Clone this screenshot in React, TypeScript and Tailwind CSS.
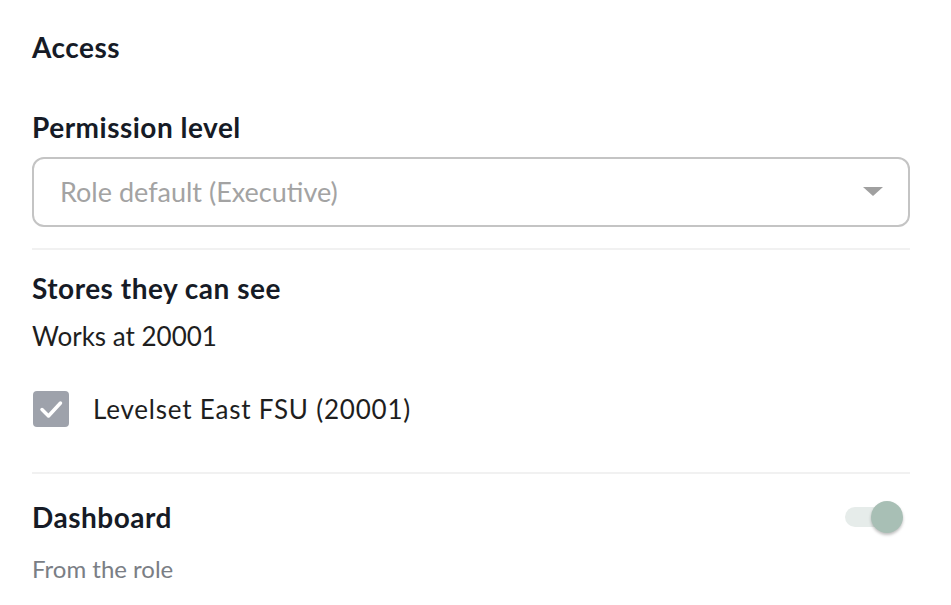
import React from 'react';

// Access settings panel
function Divider() {
  return <div className="h-[2px] w-full bg-[#f1f1f1]" />;
}

export default function App() {
  return (
    <div className="w-[951px] h-[605px] overflow-hidden bg-white font-['Lato',sans-serif] text-[#161b26]">
      <div className="w-[878px] ml-8 pt-[31px] flex flex-col">
        <h2 className="text-[28px] leading-8 font-bold tracking-[0.5px]">Access</h2>

        <h3 className="mt-12 text-[28px] leading-8 font-bold tracking-[0.5px]">Permission level</h3>
        <div className="mt-[14px] h-[70px] rounded-xl border-2 border-[#c4c4c4] flex items-center justify-between pl-[26px] pr-[25px]">
          <span className="text-[27px] text-[#a3a3a3]">Role default (Executive)</span>
          <svg width="20" height="10" viewBox="0 0 20 10">
            <path d="M0 0 L20 0 L10 9 Z" fill="#a0a0a0" />
          </svg>
        </div>

        <div className="mt-[21px]">
          <Divider />
        </div>

        <h3 className="mt-[22px] text-[28px] leading-8 font-bold tracking-[0.5px]">Stores they can see</h3>
        <p className="mt-4 text-[26px] leading-8 text-[#1e1e1e]">Works at 20001</p>

        <label className="mt-[39px] flex items-center gap-6 h-9">
          <span className="w-9 h-9 ml-px rounded-[4px] bg-[#9ea2ab] flex items-center justify-center">
            <svg width="24" height="24" viewBox="0 0 24 24" fill="none">
              <path d="M3 12.5 L9.5 19 L21.5 6" stroke="white" strokeWidth="3.5" strokeLinecap="round" strokeLinejoin="round" />
            </svg>
          </span>
          <span className="text-[26px] tracking-[0.8px] text-[#1e1e1e]">Levelset East FSU (20001)</span>
        </label>

        <div className="mt-[45px]">
          <Divider />
        </div>

        <div className="mt-[27px] flex items-center justify-between h-8">
          <h3 className="text-[28px] leading-8 font-bold tracking-[0.5px]">Dashboard</h3>
          <div className="relative w-[58px] h-8 mr-[7px]">
            <div className="absolute left-0 top-[6px] w-[50px] h-5 rounded-full bg-[#e6ecea]" />
            <div className="absolute right-0 top-0 w-8 h-8 rounded-full bg-[#a8bfb5] shadow-[0_2px_3px_rgba(0,0,0,0.25)]" />
          </div>
        </div>
        <p className="mt-5 text-[24px] leading-8 text-[#7a7e85]">From the role</p>
      </div>
    </div>
  );
}
